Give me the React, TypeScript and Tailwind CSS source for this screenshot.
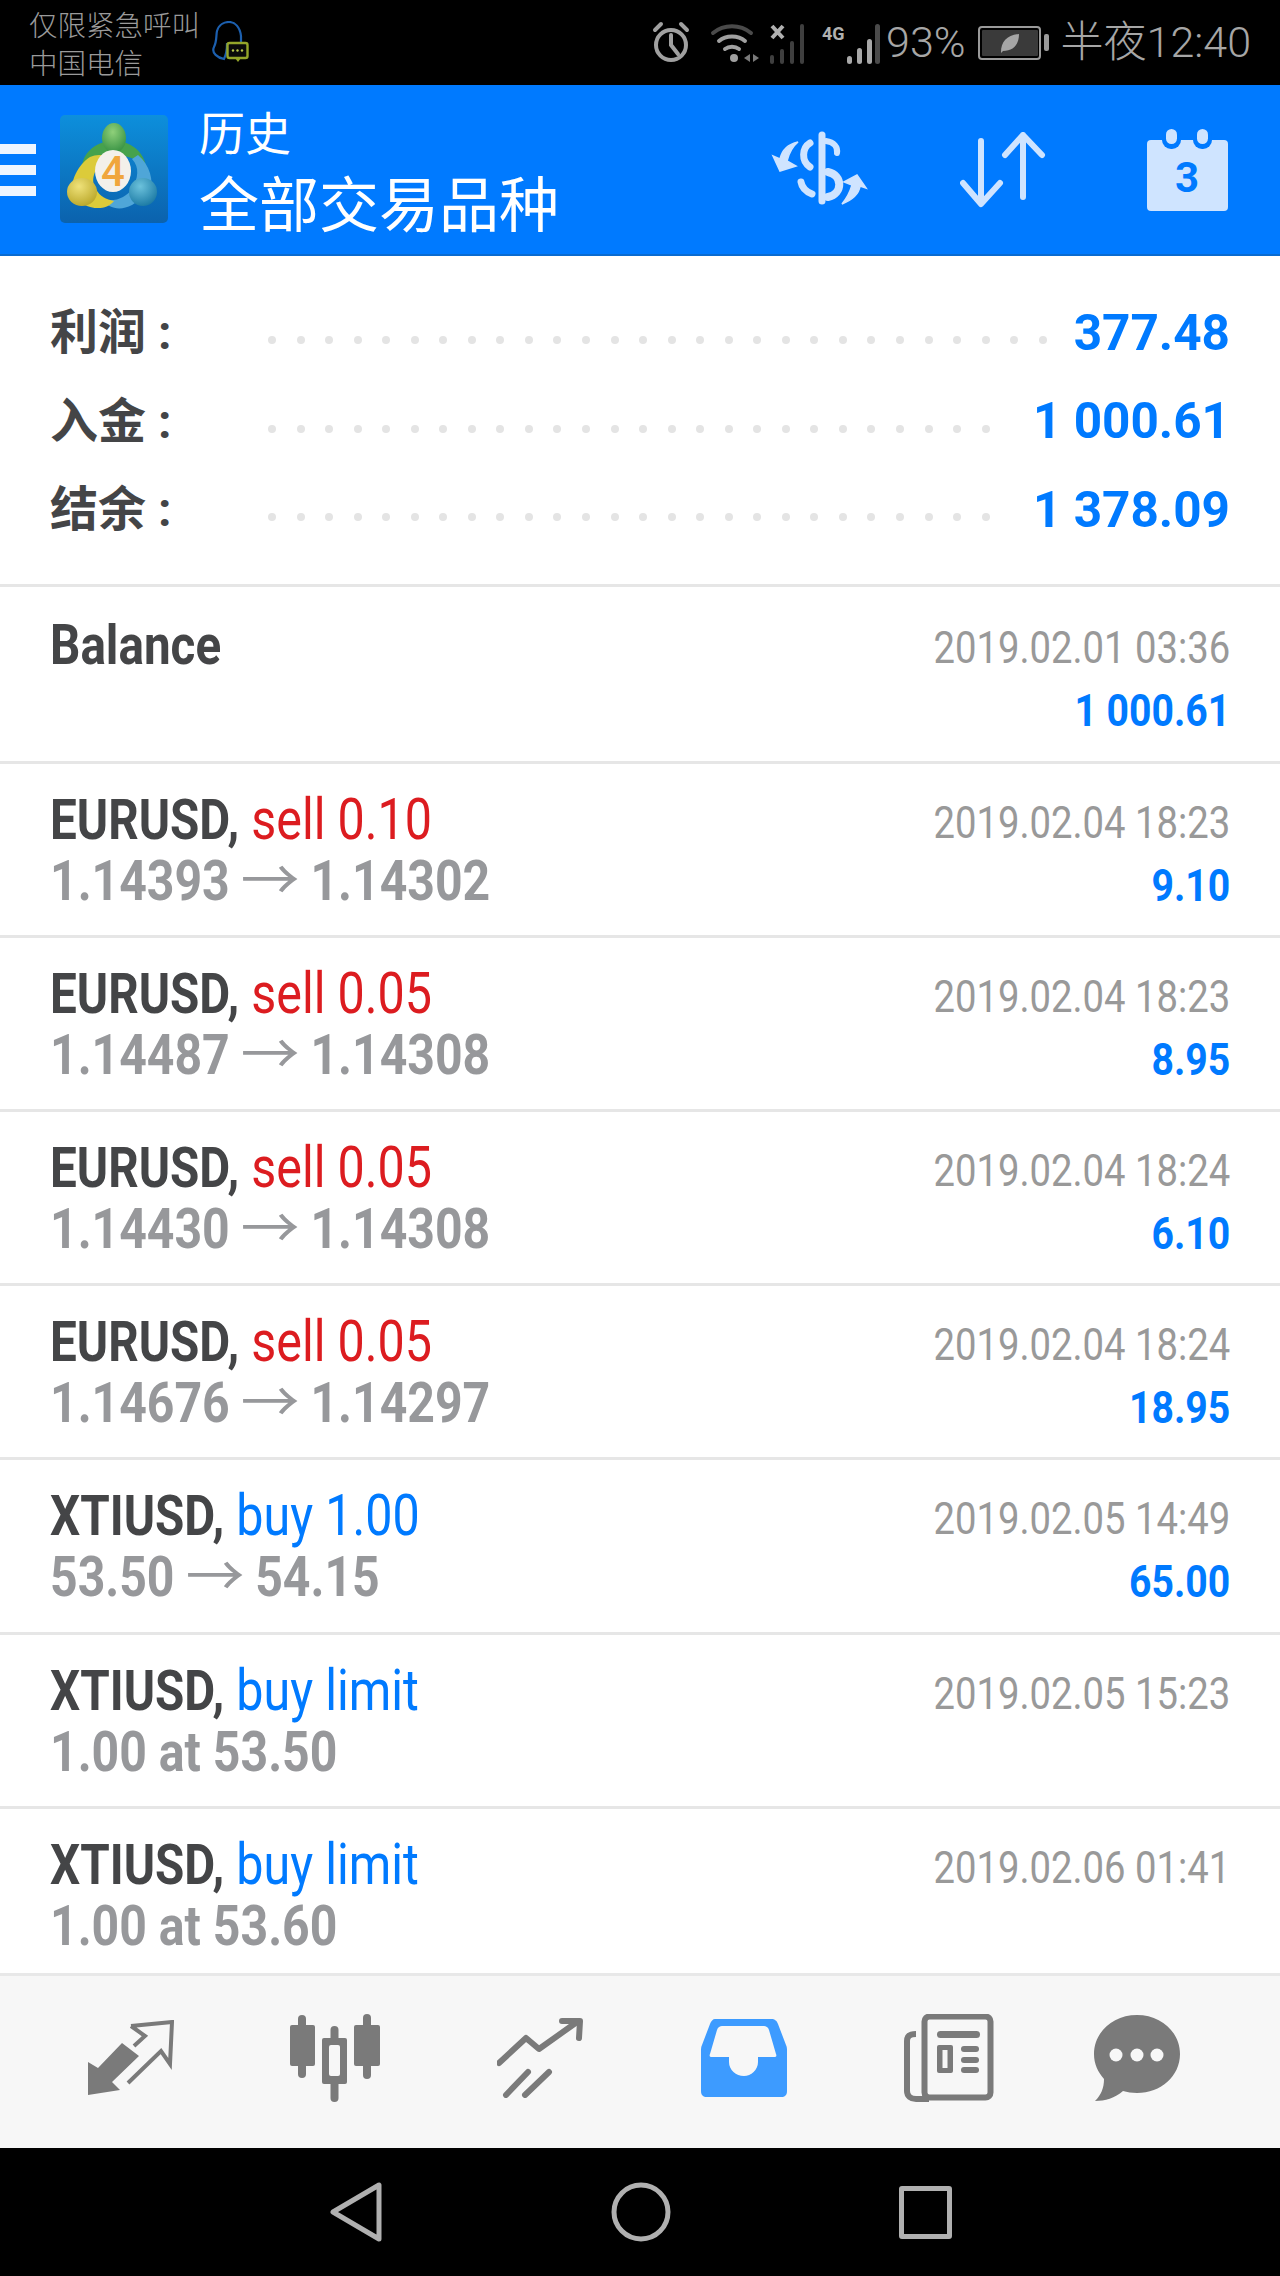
import React from "react";

type Row = {
  sym: string;
  act?: string;
  color?: string;
  sub?: string[];
  date: string;
  val?: string;
  h: string;
  first?: boolean;
};

const RED = "text-[#dc1c20]";
const BLUE = "text-[#007aff]";

const rows: Row[] = [
  { sym: "Balance", date: "2019.02.01 03:36", val: "1 000.61", h: "h-[177px]", first: true },
  { sym: "EURUSD,", act: "sell 0.10", color: RED, sub: ["1.14393", "1.14302"], date: "2019.02.04 18:23", val: "9.10", h: "h-[174px]" },
  { sym: "EURUSD,", act: "sell 0.05", color: RED, sub: ["1.14487", "1.14308"], date: "2019.02.04 18:23", val: "8.95", h: "h-[174px]" },
  { sym: "EURUSD,", act: "sell 0.05", color: RED, sub: ["1.14430", "1.14308"], date: "2019.02.04 18:24", val: "6.10", h: "h-[174px]" },
  { sym: "EURUSD,", act: "sell 0.05", color: RED, sub: ["1.14676", "1.14297"], date: "2019.02.04 18:24", val: "18.95", h: "h-[174px]" },
  { sym: "XTIUSD,", act: "buy 1.00", color: BLUE, sub: ["53.50", "54.15"], date: "2019.02.05 14:49", val: "65.00", h: "h-[175px]" },
  { sym: "XTIUSD,", act: "buy limit", color: BLUE, sub: ["1.00 at 53.50"], date: "2019.02.05 15:23", h: "h-[174px]" },
  { sym: "XTIUSD,", act: "buy limit", color: BLUE, sub: ["1.00 at 53.60"], date: "2019.02.06 01:41", h: "h-[167px]" },
];

const summary = [
  { label: "利润 :", dots: 28, val: "377.48" },
  { label: "入金 :", dots: 26, val: "1 000.61" },
  { label: "结余 :", dots: 26, val: "1 378.09" },
];

function Logo() {
  return (
    <svg viewBox="0 0 108 108" className="w-[108px] h-[108px] shrink-0">
      <defs>
        <linearGradient id="bg" x1="0" y1="0" x2="0" y2="1">
          <stop offset="0" stopColor="#0d8fdc" />
          <stop offset="1" stopColor="#0b62ad" />
        </linearGradient>
        <radialGradient id="gh" cx="0.45" cy="0.3" r="0.8">
          <stop offset="0" stopColor="#8fd07a" />
          <stop offset="1" stopColor="#2c8a3c" />
        </radialGradient>
        <radialGradient id="yh" cx="0.4" cy="0.3" r="0.8">
          <stop offset="0" stopColor="#efe27a" />
          <stop offset="1" stopColor="#b5a222" />
        </radialGradient>
        <radialGradient id="bh" cx="0.4" cy="0.3" r="0.8">
          <stop offset="0" stopColor="#6cc2dc" />
          <stop offset="1" stopColor="#14739f" />
        </radialGradient>
      </defs>
      <rect x="0" y="0" width="108" height="108" rx="5" fill="url(#bg)" />
      <path d="M22 54 C22 36 38 26 54 26 C70 26 84 36 86 52 C78 44 66 40 54 40 C42 40 30 44 22 54Z" fill="#46a24c" />
      <ellipse cx="54" cy="23" rx="12" ry="15" fill="url(#gh)" />
      <path d="M78 40 C90 50 94 66 90 78 L72 90 C60 96 50 94 40 84 C56 88 66 82 72 74 C78 64 80 52 72 44Z" fill="#4fa6d8" />
      <path d="M30 42 C38 38 50 40 46 46 C34 52 30 66 36 74 C40 82 46 84 54 86 C44 98 24 94 12 80 C10 66 18 50 30 42Z" fill="#dccb3a" />
      <ellipse cx="22" cy="77" rx="15" ry="14" fill="url(#yh)" />
      <ellipse cx="83" cy="77" rx="14" ry="14" fill="url(#bh)" />
      <ellipse cx="53" cy="56" rx="18" ry="21" fill="#f3f0ea" />
      <text x="53" y="71" textAnchor="middle" fontSize="42" fontWeight="500" fill="#f0a63c" fontFamily="Roboto, sans-serif">4</text>
    </svg>
  );
}

function ExchangeIcon() {
  return (
    <svg viewBox="0 0 150 100" className="w-[150px] h-[100px] -mx-[28px]" fill="none">
      <g stroke="#cfe4ff" strokeLinecap="round">
        <path d="M80 15 V81" strokeWidth="7" />
        <path d="M84 21 C92 22 96 27 95 33" strokeWidth="6" />
        <path d="M68 23 C60 28 59 41 68 47" strokeWidth="7" />
        <path d="M86 52 C101 55 101 74 86 77" strokeWidth="8" />
        <path d="M59 62 C60 68 65 72 70 74" strokeWidth="7" />
      </g>
      <path d="M31 36 L38 51 L54 46 L45 41 C47 33 50 27 56 22 C47 24 40 30 38 39 Z" fill="#cfe4ff" stroke="#cfe4ff" strokeWidth="1.500" />
      <path d="M124 68 L115 55 L102 62 L110 65 C108 72 105 78 100 84 C110 80 117 74 118 66 Z" fill="#cfe4ff" stroke="#cfe4ff" strokeWidth="1.500" />
    </svg>
  );
}

function ArrowsIcon() {
  return (
    <svg viewBox="0 0 86 76" className="w-[86px] h-[76px]" fill="none" stroke="#cfe4ff" strokeWidth="6" strokeLinecap="round" strokeLinejoin="round">
      <path d="M21 9 V71 M3 51 L21 72 L40 51" />
      <path d="M63 3 V65 M45 23 L63 3 L82 23" />
    </svg>
  );
}

function CalendarIcon() {
  return (
    <svg viewBox="0 0 81 83" className="w-[81px] h-[83px]">
      <rect x="0" y="12" width="81" height="71" rx="4" fill="#cfe4ff" />
      <rect x="15" y="0" width="19" height="21" rx="9" fill="#007aff" />
      <rect x="46" y="0" width="19" height="21" rx="9" fill="#007aff" />
      <rect x="19" y="1" width="11" height="15" rx="5.5" fill="#cfe4ff" />
      <rect x="50" y="1" width="11" height="15" rx="5.5" fill="#cfe4ff" />
      <text x="40" y="64" textAnchor="middle" fontSize="42" fontWeight="700" fill="#007aff" fontFamily="Roboto, sans-serif">3</text>
    </svg>
  );
}

function StatusIcons() {
  return (
    <svg viewBox="0 0 230 44" className="w-[230px] h-[44px]" fill="none">
      {/* alarm */}
      <g stroke="#a0a0a0" strokeWidth="4" strokeLinecap="round">
        <circle cx="21" cy="24" r="15" />
        <path d="M21 14 V24 L28 33" />
        <path d="M5 9 L11 3 M37 9 L31 3" />
      </g>
      {/* wifi */}
      <g fill="none" strokeLinecap="round">
        <path d="M63 12 C74 3 90 3 101 12" stroke="#4a4a4a" strokeWidth="4" />
        <path d="M69 20 C76 14 88 14 95 20" stroke="#a0a0a0" strokeWidth="4" />
        <path d="M75 28 C79 25 85 25 89 28" stroke="#a0a0a0" strokeWidth="4" />
      </g>
      <circle cx="84" cy="37" r="4" fill="#a0a0a0" />
      <path d="M100 33 L94 37 L100 41Z M103 33 L109 37 L103 41Z" fill="#7a7a7a" />
      {/* x signal */}
      <path d="M122 5 L133 17 M133 5 L122 17" stroke="#b0b0b0" strokeWidth="4" />
      <g fill="#3f3f3f">
        <rect x="120" y="34" width="4" height="9" rx="2" />
        <rect x="130" y="28" width="4" height="15" rx="2" />
        <rect x="140" y="20" width="4" height="23" rx="2" />
        <rect x="150" y="3" width="4" height="40" rx="2" />
      </g>
      {/* 4G */}
      <text x="172" y="19" fontSize="18" fontWeight="700" fill="#b0b0b0" fontFamily="Roboto, sans-serif">4G</text>
      <g fill="#a8a8a8">
        <rect x="197" y="35" width="5" height="8" rx="2.5" />
        <rect x="207" y="27" width="5" height="16" rx="2.5" />
        <rect x="217" y="18" width="5" height="25" rx="2.5" />
      </g>
      <rect x="225" y="3" width="5" height="40" rx="2.5" fill="#4a4a4a" />
    </svg>
  );
}

function QQIcon() {
  return (
    <svg viewBox="0 0 38 42" className="w-[38px] h-[42px] ml-[11px] mt-[-2px]" fill="none">
      <path d="M16 22 C16 26 16 32 13 38 C7 37 0 32 3 26 C6 20 5 14 6 10 C8 3 14 1 18 1 C24 1 29 6 30 15 L30 22" stroke="#1c5fae" strokeWidth="2.2" />
      <rect x="16.5" y="22" width="20" height="15" rx="2" stroke="#94a52a" strokeWidth="2.4" fill="#0a0a0a" />
      <path d="M24 37 L27 41 L30 37Z" fill="#94a52a" />
      <circle cx="22" cy="29.5" r="1.2" fill="#b9c84a" />
      <circle cx="26.5" cy="29.5" r="1.2" fill="#b9c84a" />
      <circle cx="31" cy="29.5" r="1.2" fill="#b9c84a" />
    </svg>
  );
}

function Battery() {
  return (
    <div className="flex items-center ml-[12px]">
      <div className="w-[63px] h-[34px] border-[2px] border-[#9a9a9a] rounded-[4px] p-[2px]">
        <div className="h-full w-[56px] bg-[#3a3a3a] rounded-[1px] flex items-center justify-center">
          <svg viewBox="0 0 22 22" className="w-[22px] h-[22px]">
            <path d="M2 20 C2 10 8 3 20 2 C20 13 14 19 4 19 L2 21Z" fill="#a5a5a5" />
          </svg>
        </div>
      </div>
      <div className="w-[5px] h-[17px] bg-[#9a9a9a] rounded-[2px] ml-[3px]" />
    </div>
  );
}

const G = "#7a7a7a";

function TradeIcon() {
  return (
    <svg viewBox="0 0 86 76" className="w-[86px] h-[76px]" fill="none">
      <path d="M0 42 L10 48 L34 23 L51 36 L24 62 L32 70 L0 75Z" fill={G} />
      <path d="M43 6 L84 2 L82 44 L73 31 L40 63 M43 6 L57 16 L46 26" stroke={G} strokeWidth="4" />
    </svg>
  );
}

function CandleIcon() {
  return (
    <svg viewBox="0 0 90 88" className="w-[90px] h-[88px]">
      <rect x="8" y="1" width="8" height="63" rx="4" fill={G} />
      <rect x="0" y="11" width="25" height="41" rx="2" fill={G} />
      <rect x="40.500" y="12" width="8" height="76" rx="4" fill={G} />
      <rect x="32" y="24" width="25" height="46" rx="2" fill={G} />
      <rect x="39" y="31" width="11" height="31" rx="2" fill="#f7f7f7" />
      <rect x="73" y="0" width="8" height="65" rx="4" fill={G} />
      <rect x="64" y="11" width="26" height="41" rx="2" fill={G} />
    </svg>
  );
}

function ChartIcon() {
  return (
    <svg viewBox="0 0 86 80" className="w-[86px] h-[80px]" fill="none" stroke={G} strokeWidth="6" strokeLinecap="round" strokeLinejoin="round">
      <path d="M2 45 L29 20 L42 31 L80 4" />
      <path d="M65 3 L83 3 L82 20" />
      <path d="M31 54 L9 77 M52 54 L28 77" />
    </svg>
  );
}

function InboxIcon() {
  return (
    <svg viewBox="0 0 86 78" className="w-[86px] h-[78px]">
      <path d="M14 0 H70 C74 0 76 2 77 5 L85 26 C86 28 86 30 86 32 V72 C86 76 84 78 80 78 H6 C2 78 0 76 0 72 V32 C0 30 0 28 1 26 L9 5 C10 2 12 0 14 0Z" fill="#3d9bff" />
      <path d="M21 7 H63 C65 7 67 8 68 11 L75 35 C76 37 75 38 73 38 H57 V43 C57 51 50 57 43 57 C35 57 28 51 28 43 V38 H11 C9 38 8 37 9 35 L16 11 C17 8 19 7 21 7Z" fill="#f7f7f7" />
    </svg>
  );
}

function NewsIcon() {
  return (
    <svg viewBox="0 0 90 88" className="w-[90px] h-[88px]" fill="none">
      <rect x="20.500" y="2.500" width="66" height="81" rx="5" stroke={G} strokeWidth="6" />
      <path d="M12 20 C6 20 3 22 3 27 V77 C3 82 7 85 12 85 H25" stroke={G} strokeWidth="6" />
      <rect x="33" y="17" width="43" height="7" rx="3.500" fill={G} />
      <rect x="33" y="31" width="16" height="28" rx="2" fill={G} />
      <rect x="38.500" y="36" width="5" height="18" fill="#f7f7f7" />
      <rect x="57" y="32" width="18" height="6" rx="3" fill={G} />
      <rect x="57" y="43" width="18" height="6" rx="3" fill={G} />
      <rect x="57" y="53" width="18" height="6" rx="3" fill={G} />
    </svg>
  );
}

function ChatIcon() {
  return (
    <svg viewBox="0 0 86 86" className="w-[86px] h-[86px]">
      <path d="M43 0 C67 0 86 17 86 39 C86 61 67 78 43 78 C38 78 33 77 29 76 C21 83 11 86 1 86 C7 80 10 73 10 64 C4 57 0 49 0 39 C0 17 19 0 43 0Z" fill={G} />
      <circle cx="22" cy="40" r="6.500" fill="#f7f7f7" />
      <circle cx="43" cy="40" r="6.500" fill="#f7f7f7" />
      <circle cx="63" cy="40" r="6.500" fill="#f7f7f7" />
    </svg>
  );
}

function NavIcons() {
  return (
    <div className="h-[128px] bg-black flex items-center pl-[330px]">
      <svg viewBox="0 0 52 60" className="w-[52px] h-[60px]" fill="none" stroke="#b0b0b0" strokeWidth="5" strokeLinejoin="round">
        <path d="M3 30 L49 3 V57Z" />
      </svg>
      <svg viewBox="0 0 60 60" className="w-[60px] h-[60px] ml-[229px]" fill="none" stroke="#b0b0b0" strokeWidth="5">
        <circle cx="30" cy="30" r="27" />
      </svg>
      <div className="w-[53px] h-[53px] border-[5px] border-[#b0b0b0] rounded-[3px] ml-[228px]" />
    </div>
  );
}

function ListRow({ r }: { r: Row }) {
  return (
    <div className={`${r.h} border-t-[3px] border-[#e6e6e6] flex justify-between pl-[50px] pr-[50px] shrink-0`}>
      <div className={r.first ? "pt-[28px]" : "pt-[25px]"}>
        <div className="origin-left scale-x-[0.85] whitespace-nowrap text-[56px] leading-[61px]">
          <span className="font-bold text-[#444547]">{r.sym}</span>
          {r.act && <span className={`${r.color} font-normal text-[57px]`}> {r.act}</span>}
        </div>
        {r.sub && (
          <div className="origin-left scale-x-[0.86] whitespace-nowrap text-[56px] leading-[61px] font-bold text-[#97989b]">
            {r.sub[0]}
            {r.sub[1] && (
              <>
                {" "}
                <span className="inline-block font-normal scale-x-[1.22] mx-[5px]">→</span> {r.sub[1]}
              </>
            )}
          </div>
        )}
      </div>
      <div className={`${r.first ? "pt-[29px]" : "pt-[27px]"} text-right`}>
        <div className="origin-right scale-x-[0.85] whitespace-nowrap text-[45px] leading-[63px] text-[#999999]">{r.date}</div>
        {r.val && (
          <div className={`origin-right scale-x-[0.87] whitespace-nowrap text-[45px] leading-[63px] font-bold ${BLUE}`}>{r.val}</div>
        )}
      </div>
    </div>
  );
}

export default function App() {
  return (
    <div className="w-[1280px] h-[2276px] flex flex-col bg-white overflow-hidden font-['Roboto','Noto_Sans_CJK_SC',sans-serif]">
      {/* status bar */}
      <div className="h-[85px] bg-black flex items-center pl-[29px] pr-[29px] shrink-0">
        <div className="text-[28.500px] leading-[38px] text-[#9a9a9a] font-['Noto_Sans_CJK_SC',sans-serif] font-light">
          <div>仅限紧急呼叫</div>
          <div>中国电信</div>
        </div>
        <QQIcon />
        <div className="ml-auto flex items-center text-[#a6a6a6]">
          <StatusIcons />
          <span className="text-[43px] leading-none font-light ml-[6px]">93%</span>
          <Battery />
          <span className="text-[43px] leading-none font-light ml-[12px] whitespace-nowrap">半夜12:40</span>
        </div>
      </div>

      {/* header */}
      <div className="h-[171px] bg-[#007aff] border-b-[2px] border-[#0a6bd0] flex items-center shrink-0">
        <div className="w-[36px] flex flex-col gap-[11px] shrink-0">
          <div className="h-[10px] bg-[#eef5ff]" />
          <div className="h-[10px] bg-[#eef5ff]" />
          <div className="h-[10px] bg-[#eef5ff]" />
        </div>
        <div className="ml-[24px] mt-[-2px]">
          <Logo />
        </div>
        <div className="ml-[31px] mt-[-3px] text-white font-['Noto_Sans_CJK_SC',sans-serif] font-normal">
          <div className="text-[46px] leading-[66px]">历史</div>
          <div className="text-[60px] leading-[76px]">全部交易品种</div>
        </div>
        <div className="ml-auto flex items-center pr-[52px]">
          <ExchangeIcon />
          <div className="ml-[96px]">
            <ArrowsIcon />
          </div>
          <div className="ml-[101px]">
            <CalendarIcon />
          </div>
        </div>
      </div>

      {/* summary */}
      <div className="h-[328px] pt-[33px] pl-[50px] pr-[50px] shrink-0">
        {summary.map((s) => (
          <div key={s.label} className="h-[88.500px] flex items-center">
            <div className="w-[218px] text-[48px] font-bold text-[#444547] leading-none whitespace-nowrap shrink-0">{s.label}</div>
            <div className="flex gap-[20.560px] mt-[14px]">
              {Array.from({ length: s.dots }).map((_, i) => (
                <div key={i} className="w-[8px] h-[8px] rounded-full bg-[#e4e4e4]" />
              ))}
            </div>
            <div className={`ml-auto text-[49.500px] font-bold leading-none whitespace-nowrap ${BLUE}`}>{s.val}</div>
          </div>
        ))}
      </div>

      {/* list */}
      {rows.map((r, i) => (
        <ListRow key={i} r={r} />
      ))}

      {/* tab bar */}
      <div className="h-[175px] bg-[#f7f7f7] border-t-[3px] border-[#e8e8e8] flex items-center pl-[88px] pb-[8px] shrink-0">
        <TradeIcon />
        <div className="ml-[116px]">
          <CandleIcon />
        </div>
        <div className="ml-[117px]">
          <ChartIcon />
        </div>
        <div className="ml-[118px]">
          <InboxIcon />
        </div>
        <div className="ml-[117px]">
          <NewsIcon />
        </div>
        <div className="ml-[100px]">
          <ChatIcon />
        </div>
      </div>

      <NavIcons />
    </div>
  );
}
